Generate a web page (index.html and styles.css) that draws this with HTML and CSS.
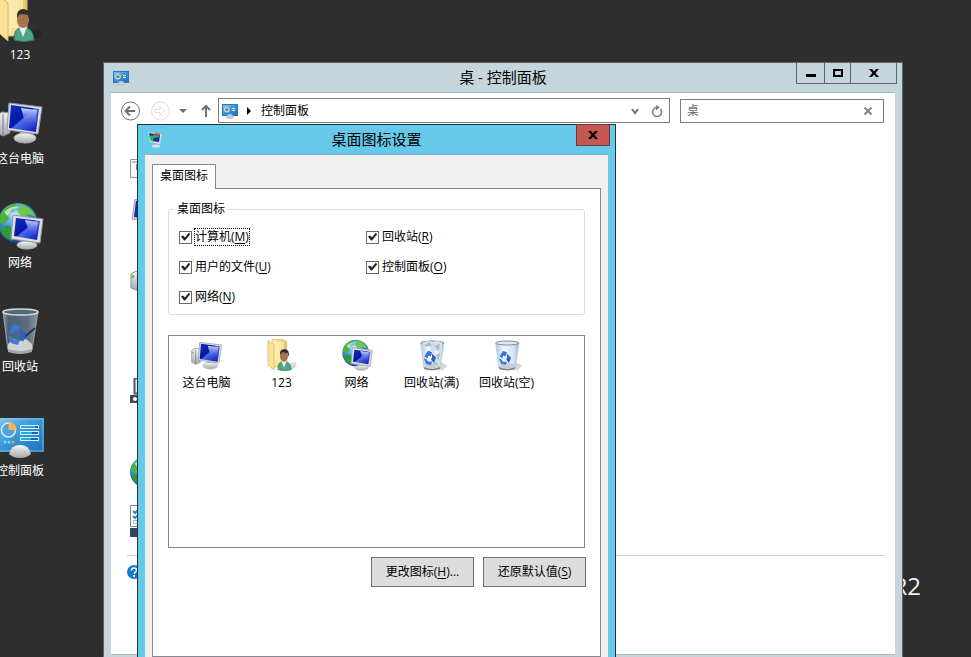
FILE: index.html
```html
<!DOCTYPE html>
<html lang="zh-CN">
<head>
<meta charset="utf-8">
<title>桌面图标设置</title>
<link rel="stylesheet" href="styles.css">
</head>
<body>
<svg class="defs" aria-hidden="true">
  <defs>
    <linearGradient id="screen" x1="0" y1="0" x2="1" y2="1">
      <stop offset="0" stop-color="#1230c8"/><stop offset=".45" stop-color="#0616a0"/><stop offset=".5" stop-color="#4a6af0"/><stop offset="1" stop-color="#0a12b0"/>
    </linearGradient>
    <linearGradient id="shine" x1="0" y1="0" x2="0" y2="1">
      <stop offset="0" stop-color="#c8dcff"/><stop offset="1" stop-color="#1424c4" stop-opacity=".2"/>
    </linearGradient>
    <linearGradient id="silver" x1="0" y1="0" x2="0" y2="1">
      <stop offset="0" stop-color="#f6f6f6"/><stop offset="1" stop-color="#a4a8ac"/>
    </linearGradient>
    <linearGradient id="gold" x1="0" y1="0" x2="1" y2="0">
      <stop offset="0" stop-color="#fff0b0"/><stop offset="1" stop-color="#e6c264"/>
    </linearGradient>
    <radialGradient id="sea" cx=".4" cy=".3" r=".75">
      <stop offset="0" stop-color="#a4dcfa"/><stop offset=".5" stop-color="#3a8cd8"/><stop offset="1" stop-color="#1a2c94"/>
    </radialGradient>
    <linearGradient id="panel" x1="0" y1="0" x2="1" y2="1">
      <stop offset="0" stop-color="#7cc8ee"/><stop offset=".5" stop-color="#3694d6"/><stop offset="1" stop-color="#2070ba"/>
    </linearGradient>
    <linearGradient id="glass" x1="0" y1="0" x2="1" y2="0">
      <stop offset="0" stop-color="#b4cce4"/><stop offset=".35" stop-color="#eef6ff"/><stop offset=".75" stop-color="#d4e6f8"/><stop offset="1" stop-color="#a4b8cc"/>
    </linearGradient>
    <linearGradient id="smoke" x1="0" y1="0" x2="1" y2="0">
      <stop offset="0" stop-color="#8c9ca8"/><stop offset=".15" stop-color="#4c6074"/><stop offset=".7" stop-color="#5c6e80"/><stop offset="1" stop-color="#8c98a2"/>
    </linearGradient>

    <symbol id="i-pc" viewBox="0 0 48 48">
      <path d="M1 17 6 14 14 15V35L7 38 1 35z" fill="url(#silver)" stroke="#8c9094"/>
      <path d="M7 16V38" stroke="#787c80"/><path d="M3 19v3" stroke="#58c838" stroke-width="2"/>
      <path d="M24 34h10l2 6H22z" fill="#b4b8bc"/>
      <ellipse cx="29" cy="40" rx="11" ry="5" fill="url(#silver)" stroke="#b0b4b8"/>
      <path d="M13 5 46 9 42 36 11 32z" fill="#dcdee0" stroke="#94989c"/>
      <path d="M15 7 43 11 40 34 13 30z" fill="url(#screen)"/>
      <path d="M25 10 41 12 39 30 31 32z" fill="url(#shine)"/>
    </symbol>

    <symbol id="i-user" viewBox="0 0 48 48">
      <path d="M28 40 44 34 46 42 36 47z" fill="#000" opacity=".14"/>
      <path d="M9 1h17l5 3v38H9z" fill="url(#gold)" stroke="#d4b45c"/>
      <path d="M14 4h13v30H14z" fill="#fff2bc" opacity=".6"/>
      <path d="M3 2 12 9V47L3 39z" fill="#fbe296" stroke="#d8b860"/>
      <path d="M18 46q0-12 8-13 11 0 12 13-10 3-20 0z" fill="#52a484" stroke="#347c5c"/>
      <path d="M23 33l4 10 4-10z" fill="#e8f0ee"/>
      <ellipse cx="27" cy="26" rx="6" ry="8" fill="#a87450"/>
      <path d="M21 24q-1-9 7-9 8 1 6 12l-2-6-8-1z" fill="#343028"/>
    </symbol>

    <symbol id="i-globe" viewBox="0 0 48 48">
      <circle cx="22" cy="21" r="20" fill="url(#sea)"/>
      <path d="M4 13Q10 3 20 2L17 9 11 11 13 17 7 22 3 20z" fill="#4cb434"/>
      <path d="M24 2q12 3 16 13l-8-3-4 4-7-5z" fill="#6cc848"/>
      <path d="M4 26l8-3 6 6-2 10Q6 35 4 26z" fill="#2c9c34"/>
      <path d="M8 10Q16 3 24 5L17 7 11 14z" fill="#e6f8d4" opacity=".7"/>
      <path d="M15 12l6-3 4 5-3 6-6-2z" fill="#c8ecfc" opacity=".7"/>
    </symbol>

    <symbol id="i-net" viewBox="0 0 48 48">
      <use href="#i-globe"/>
      <path d="M27 36h8l2 7H25z" fill="#b4b8bc"/>
      <ellipse cx="31" cy="43" rx="10" ry="4" fill="url(#silver)" stroke="#b0b4b8"/>
      <path d="M17 13 47 17 44 41 15 37z" fill="#dcdee0" stroke="#94989c"/>
      <path d="M20 16 44 19 41 38 18 34z" fill="url(#screen)"/>
      <path d="M29 18 42 20 40 32 35 36z" fill="url(#shine)"/>
    </symbol>

    <symbol id="i-arrows" viewBox="0 0 48 48">
      <path d="M13 26 18 18 24 20 22 26 18 25 17 29z" fill="#3c74d4"/>
      <path d="M24 22 30 28 27 36 23 31 24 28z" fill="#2c62c4"/>
      <path d="M12 29 16 31 18 34 24 34 22 39 15 37z" fill="#3c7cdc"/>
    </symbol>

    <symbol id="i-bin" viewBox="0 0 48 48">
      <path d="M36 34 47 40 40 47 32 47z" fill="#000" opacity=".16"/>
      <path d="M7 6 12 44q12 5 24 0L42 6z" fill="url(#glass)" stroke="#b4c0cc"/>
      <ellipse cx="24" cy="40" rx="11" ry="4" fill="#c8ccd0"/>
      <path d="M12 42q12 5 24 0v3q-12 4-24 0z" fill="#84888c"/>
      <ellipse cx="24.500" cy="6" rx="17.500" ry="3" fill="#dce8f4" stroke="#848c94" stroke-width="1.500"/>
      <use href="#i-arrows"/>
    </symbol>

    <symbol id="i-full" viewBox="0 0 48 48">
      <use href="#i-bin"/>
      <path d="M9 8 17 2 25 5 33 2 40 8 36 38 30 41 25 37 29 25 19 14z" fill="#d4dfe8" opacity=".9"/>
      <path d="M12 10 20 4 24 12zM28 11 36 7 34 18zM30 24 36 21 34 33zM28 34 34 37 26 40z" fill="#acbccc"/>
      <path d="M14 13 22 10 20 18zM27 18 34 18 30 24z" fill="#f6faff"/>
      <use href="#i-arrows"/>
    </symbol>

    <symbol id="i-dark" viewBox="0 0 48 48">
      <path d="M7 6 12 44q12 5 24 0L42 6z" fill="url(#smoke)" stroke="#98a0a8"/>
      <path d="M12 38 17 33 24 35 30 33 36 38V44q-12 5-24 0z" fill="#d0d2d4"/>
      <path d="M12 43q12 4 24 0v3q-12 4-24 0z" fill="#a4a6a8"/>
      <path d="M39 22 26 33" stroke="#283440" stroke-width="2"/>
      <ellipse cx="24.500" cy="6" rx="17.500" ry="3" fill="#54687a" stroke="#d4d8dc" stroke-width="1.500"/>
      <use href="#i-arrows"/>
    </symbol>

    <symbol id="i-panel" viewBox="0 0 48 48">
      <path d="M0 8h48v34H0z" fill="url(#panel)"/>
      <path d="M1 9h46v32H1z" fill="none" stroke="#a4dcf8" opacity=".6"/>
      <circle cx="12.500" cy="20" r="7" fill="#4ca4dc" stroke="#d8f0fc" stroke-width="1.500"/>
      <path d="M12.500 20V12a8 8 0 0 1 8 8z" fill="#fcb454"/>
      <circle cx="9" cy="32" r="1.500" fill="#5ce8fc"/><circle cx="13" cy="32" r="1.500" fill="#5ce8fc"/><circle cx="17" cy="32" r="1.500" fill="#fca434"/>
      <path d="M24 15h19v4H24zM24 21h19v4H24zM24 27h19v4H24z" fill="#d8f4fc"/>
      <path d="M25 16h14v2H25zM25 22h11v2H25zM25 28h10v2H25z" fill="#28a8dc"/>
      <path d="M39 16h3v2h-3zM36 22h6v2h-6zM35 28h7v2h-7z" fill="#1464b4"/>
      <path d="M13 44Q15 35 24 35t11 9q-4 4-11 4t-11-4z" fill="url(#silver)"/>
    </symbol>

    <symbol id="i-panel-s" viewBox="0 0 16 16">
      <path d="M0 1h16v12H0z" fill="#2478c0"/><path d="M1 2h14v10H1z" fill="url(#panel)"/>
      <circle cx="5" cy="6.500" r="2.500" fill="#3c98d8" stroke="#e4f6ff"/><path d="M5 6.500v-3a3 3 0 0 1 3 3z" fill="#fcac3c"/>
      <path d="M10 5.500h3M10 7.500h3" stroke="#fff"/>
      <path d="M4 15q1-4 4-4t4 4q-4 2-8 0z" fill="#c4c8ca"/>
    </symbol>

    <symbol id="i-close" viewBox="0 0 10 8">
      <path d="M0 0H3L5 2.500 7 0h3L6.500 4 10 8H7L5 5.500 3 8H0L3.500 4z"/>
    </symbol>
  </defs>
</svg>

<main class="desktop">
  <ul class="shortcuts">
    <li><svg><use href="#i-user"/></svg><span>123</span></li>
    <li><svg><use href="#i-pc"/></svg><span>这台电脑</span></li>
    <li><svg><use href="#i-net"/></svg><span>网络</span></li>
    <li><svg><use href="#i-dark"/></svg><span>回收站</span></li>
    <li><svg><use href="#i-panel"/></svg><span>控制面板</span></li>
  </ul>
  <p class="edition">R2</p>

  <section class="window explorer">
    <header class="titlebar">
      <svg class="icon16"><use href="#i-panel-s"/></svg>
      <h1>桌 - 控制面板</h1>
      <div class="controls">
        <button type="button" class="min" aria-label="最小化"><svg viewBox="0 0 10 8"><path d="M0 5h10v3H0z"/></svg></button>
        <button type="button" class="max" aria-label="最大化"><svg viewBox="0 0 10 8"><path d="M1 1h8v6H1z" fill="none" stroke="#000" stroke-width="2"/></svg></button>
        <button type="button" class="shut" aria-label="关闭"><svg><use href="#i-close"/></svg></button>
      </div>
    </header>
    <div class="client">
      <nav class="navbar">
        <button type="button" class="nav-round" aria-label="后退"><svg viewBox="0 0 20 20" fill="none" stroke="#707070"><circle cx="10.500" cy="10" r="9"/><path d="M15 10H6M10 5.500 5.500 10l4.500 4.500" stroke-width="2"/></svg></button>
        <button type="button" class="nav-round" aria-label="前进" disabled><svg viewBox="0 0 20 20" fill="none" stroke="#dcdcdc"><circle cx="10.500" cy="10" r="9"/><path d="M5 8.500h5V5.500l4.500 4.500-4.500 4.500v-3H5z"/></svg></button>
        <button type="button" class="nav-drop" aria-label="最近位置"><svg viewBox="0 0 8 8"><path d="M0 2h8L4 6z" fill="#707070"/></svg></button>
        <button type="button" class="nav-up" aria-label="上移"><svg viewBox="0 0 12 14" fill="none" stroke="#707070" stroke-width="2"><path d="M6 13V2M2 6l4-4 4 4"/></svg></button>
        <div class="address">
          <svg class="icon16"><use href="#i-panel-s"/></svg>
          <svg class="crumb" viewBox="0 0 4 8"><path d="M0 0 4 4 0 8z"/></svg>
          <a href="#">控制面板</a>
          <button type="button" aria-label="历史"><svg viewBox="0 0 12 12" fill="none" stroke="#707070" stroke-width="2"><path d="M3 4 6 8 9 4"/></svg></button>
          <button type="button" aria-label="刷新"><svg viewBox="0 0 12 12"><path d="M9.500 4A4.500 4.500 0 1 1 5.500 2.500" fill="none" stroke="#808080" stroke-width="1.600"/><path d="M5 0 9 2.500 5 5.500z" fill="#808080"/></svg></button>
        </div>
        <div class="search">
          <input type="text" value="桌" aria-label="搜索">
          <button type="button" aria-label="清除"><svg viewBox="0 0 12 12"><path d="M2.500 2.500l7 7M9.500 2.500l-7 7" stroke="#808080" stroke-width="1.800"/></svg></button>
        </div>
      </nav>
      <ul class="results">
        <li><svg viewBox="0 0 32 32"><path d="M.5 3.500h28v18H.5z" fill="#f6f6f6" stroke="#909498"/><path d="M2 6h26" stroke="#7c8c9c"/><path d="M6 8h8v6H6z" fill="#8890a0"/></svg></li>
        <li><svg viewBox="0 0 32 32"><path d="M5 0 30 3 28 24 2 20z" fill="#d0d4d8" stroke="#a0a4a8"/><path d="M6 2 28 5 26 21 4 18z" fill="#1428b8"/><path d="M7 8l6 1v10l-6-2z" fill="#189c50"/></svg></li>
        <li><svg viewBox="0 0 32 32"><path d="M1 3 6 0 18 2V18L6 19 1 17z" fill="url(#silver)" stroke="#84888c"/><path d="M3 4v3" stroke="#58c820" stroke-width="2"/></svg></li>
        <li><svg viewBox="0 0 32 32"><path d="M4.500.500h20v15h-20z" fill="#e4f0fc" stroke="#4c5c6c" stroke-width="2"/><path d="M0 17h30v8H0z" fill="#484848"/><circle cx="5" cy="21" r="2" fill="#fff"/></svg></li>
        <li><svg viewBox="2 0 42 42"><use href="#i-globe" width="48" height="48"/></svg></li>
        <li><svg viewBox="0 0 32 32"><path d="M.5.500h26v21H.5z" fill="#fff" stroke="#848888"/><path d="M3 6l2 2 4-4M3 11l2 2 4-4" fill="none" stroke="#2c8cc4" stroke-width="2"/><path d="M3.500 15.500h4v3h-4z" fill="none" stroke="#b0b0b0"/><path d="M0 23h28v9H0z" fill="#344460"/></svg></li>
      </ul>
      <div class="help">
        <svg viewBox="0 0 14 14"><circle cx="7" cy="7" r="7" fill="#1878d0"/><path d="M4.500 5.500q0-2.500 2.500-2.500t2.500 2T7 8.500M7 10v2" fill="none" stroke="#fff" stroke-width="1.500"/></svg>
      </div>
    </div>
  </section>

  <section class="window dialog">
    <header class="titlebar">
      <svg class="icon16" viewBox="0 0 16 16"><path d="M7 11h4l1 4H6z" fill="#b0b4b8"/><ellipse cx="9" cy="14" rx="4" ry="1.500" fill="#e0e2e4"/><path d="M1 0 15 2 13 12 3 10z" fill="#d8dcde"/><path d="M2 1 13 3 12 10 4 9z" fill="#1826b4"/><path d="M2 4 9 3 13 1 12 5 7 6 6 9H4z" fill="#24bc50"/><path d="M8 1l5 1-2 2-4-1z" fill="#dc3830"/></svg>
      <h2>桌面图标设置</h2>
      <div class="controls">
        <button type="button" class="quit" aria-label="关闭"><svg><use href="#i-close"/></svg></button>
      </div>
    </header>
    <div class="client">
      <div class="tabs" role="tablist"><button type="button" role="tab" aria-selected="true">桌面图标</button></div>
      <form class="page">
        <fieldset>
          <legend>桌面图标</legend>
          <label><input type="checkbox" checked><span class="focus">计算机(<u>M</u>)</span></label>
          <label><input type="checkbox" checked><span>回收站(<u>R</u>)</span></label>
          <label><input type="checkbox" checked><span>用户的文件(<u>U</u>)</span></label>
          <label><input type="checkbox" checked><span>控制面板(<u>O</u>)</span></label>
          <label><input type="checkbox" checked><span>网络(<u>N</u>)</span></label>
        </fieldset>
        <ul class="previews">
          <li><svg><use href="#i-pc"/></svg><span>这台电脑</span></li>
          <li><svg><use href="#i-user"/></svg><span>123</span></li>
          <li><svg><use href="#i-net"/></svg><span>网络</span></li>
          <li><svg><use href="#i-full"/></svg><span>回收站(满)</span></li>
          <li><svg><use href="#i-bin"/></svg><span>回收站(空)</span></li>
        </ul>
        <div class="actions">
          <button type="button">更改图标(<u>H</u>)...</button>
          <button type="button">还原默认值(<u>S</u>)</button>
        </div>
      </form>
    </div>
  </section>
</main>
</body>
</html>
```

FILE: styles.css
```css
* { box-sizing: border-box; }

body {
  margin: 0;
  font: 12px/16px "Open Sans", "Noto Sans CJK SC", sans-serif;
  color: #000;
  background: #2e2e2e;
}

ul { margin: 0; padding: 0; list-style: none; }
svg { display: block; flex: none; }
h1, h2 { margin: 0; padding-bottom: 2px; font-size: 15px; line-height: 20px; font-weight: 400; }

button {
  display: flex;
  align-items: center;
  justify-content: center;
  margin: 0;
  padding: 0;
  border: 0;
  background: none;
  font: inherit;
  color: inherit;
}

u { text-underline-offset: 2px; }

.defs { position: absolute; width: 0; height: 0; }
.icon16 { width: 16px; height: 16px; }

.desktop { position: relative; height: 100vh; overflow: hidden; }

.shortcuts {
  position: absolute;
  top: -6px;
  left: -20px;
  width: 80px;
  display: grid;
  gap: 35px;
  color: #fff;
}
.shortcuts li { display: flex; flex-direction: column; align-items: center; gap: 5px; }
.shortcuts svg { width: 48px; height: 48px; }

.edition {
  position: absolute;
  right: 50px;
  bottom: 55px;
  margin: 0;
  font-size: 24px;
  line-height: 32px;
  color: #f0f0f0;
}

/* Windows */
.window { position: absolute; display: flex; flex-direction: column; }

.titlebar {
  display: grid;
  grid-template-columns: 1fr auto 1fr;
  height: 29px;
  align-items: center;
}
.titlebar .controls { display: flex; align-self: start; justify-self: end; margin-top: -1px; }
.controls svg { width: 10px; height: 8px; }

.explorer {
  top: 62px;
  right: 68px;
  bottom: -6px;
  left: 103px;
  padding: 0 7px;
  border: 1px solid #5a6468;
  border-bottom-width: 8px;
  border-bottom-color: #c4d6dc;
  background: #c4d6dc;
}
.explorer .titlebar > .icon16 { margin-left: 2px; }
.explorer .controls { margin-right: -2px; }
.explorer .controls button { height: 22px; border: 1px solid #60646c; }
.explorer .controls button + button { border-left: 0; }
.explorer .controls .min { width: 29px; }
.explorer .controls .max { width: 26px; }
.explorer .controls .shut { width: 46px; }
.explorer .client {
  flex: 1;
  border-top: 1px solid #a8b8c4;
  border-bottom: 1px solid #a8b8c4;
  background: #fff;
}

.navbar { display: flex; align-items: center; padding: 4px 11px 0 9px; height: 31px; }
.nav-round svg { width: 20px; height: 20px; }
.nav-round + .nav-round { margin-left: 10px; }
.nav-drop { margin-left: 9px; }
.nav-drop svg { width: 8px; height: 8px; }
.nav-up { margin: 0 6px 0 13px; }
.nav-up svg { width: 12px; height: 14px; }

.address, .search { display: flex; align-items: center; border: 1px solid #7c7c7c; background: #fff; }
.address { flex: 1; height: 25px; padding: 0 6px 0 3px; }
.address .crumb { width: 4px; height: 8px; margin: 0 10px 0 9px; }
.address a { flex: 1; color: inherit; text-decoration: none; }
.address button { margin-left: 10px; }
.address button svg, .search button svg { width: 12px; height: 12px; }

.search { width: 204px; height: 24px; margin-left: 10px; padding: 0 9px 0 6px; }
.search input {
  flex: 1;
  min-width: 0;
  padding: 0;
  border: 0;
  outline: 0;
  background: none;
  font: inherit;
  color: #707070;
}

.results {
  display: grid;
  grid-template-rows: 43px 72px 107px 78px 49px 50px;
  padding: 32px 19px 0;
}
.results svg { width: 32px; height: 32px; }
.help { margin: 0 10px 0 16px; padding-top: 9px; border-top: 1px solid #ccc; }
.help svg { width: 14px; height: 14px; }

.dialog {
  top: 124px;
  left: 137px;
  bottom: -42px;
  width: 479px;
  padding: 0 7px 8px;
  border: 1px solid #24343c;
  background: #66c9e9;
}
.dialog .titlebar > .icon16 { margin-left: 2px; }
.dialog .controls { margin-right: -2px; }
.dialog .quit { width: 34px; height: 22px; border: 1px solid #643c3c; background: #c4584e; }
.dialog .client {
  flex: 1;
  display: flex;
  flex-direction: column;
  padding: 9px 7px 33px;
  border-top: 1px solid #88acc4;
  background: #f0f0f0;
}

.tabs { display: flex; }
.tabs button {
  position: relative;
  z-index: 1;
  height: 25px;
  margin-bottom: -1px;
  padding: 0 7px 3px;
  border: 1px solid #888894;
  border-bottom: 0;
  background: #fff;
}

.page {
  flex: 1;
  padding: 12px 15px;
  border: 1px solid #888894;
  background: #fff;
}

fieldset {
  display: grid;
  grid-template-columns: 187px 1fr;
  row-gap: 14px;
  margin: 0;
  padding: 12px 10px 9px;
  border: 1px solid #d4dfe8;
  border-radius: 3px;
}
legend { margin-left: -4px; padding: 0 2px; }
fieldset label { display: flex; align-items: center; gap: 3px; }
.focus { outline: 1px dotted #000; }

input[type="checkbox"] {
  appearance: none;
  width: 13px;
  height: 13px;
  margin: 0;
  border: 1px solid #686868;
  background: #fff;
}
input[type="checkbox"]:checked::before {
  content: "";
  display: block;
  width: 11px;
  height: 11px;
  background: #202020;
  clip-path: polygon(1px 5px, 3px 4px, 5px 6px, 9px 1px, 10px 3px, 5px 9px, 4px 9px);
}

.previews {
  display: grid;
  grid-template-columns: repeat(5, 75px);
  align-content: start;
  height: 213px;
  margin-top: 20px;
  padding-top: 3px;
  border: 1px solid #828790;
}
.previews li { display: flex; flex-direction: column; align-items: center; gap: 4px; white-space: nowrap; }
.previews svg { width: 32px; height: 32px; }

.actions { display: flex; justify-content: flex-end; gap: 9px; margin: 9px -1px 0 0; }
.actions button {
  display: block;
  width: 103px;
  height: 30px;
  border: 1px solid #707070;
  background: #ddd;
}
```
